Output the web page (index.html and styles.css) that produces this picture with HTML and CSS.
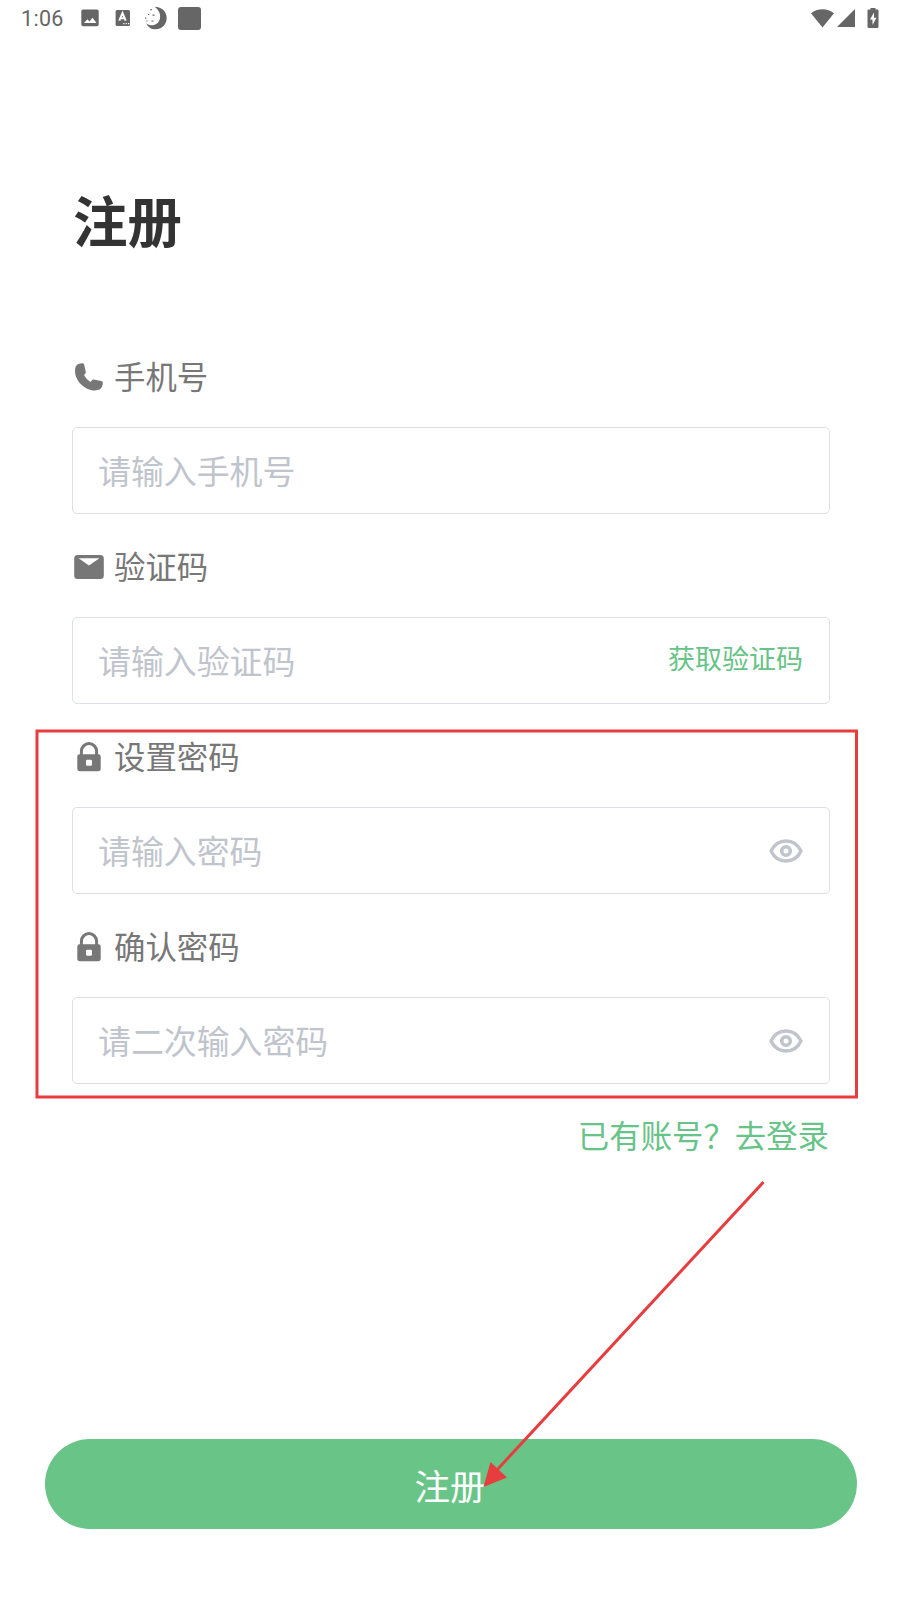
FILE: index.html
```html
<!DOCTYPE html>
<html lang="zh-CN">

	<head>
		<meta charset="UTF-8">
		<title>注册</title>
		<link rel="stylesheet" href="styles.css">
	</head>

	<body>

		<!-- 图标 -->
		<svg class="defs" width="0" height="0">
			<symbol id="lock" viewBox="0 0 30 30">
				<path d="M7.400 13V9.200a7.600 7.600 0 0 1 15.200 0V13" fill="none" stroke="currentColor" stroke-width="3" />
				<path fill="currentColor" fill-rule="evenodd" d="M5.500 12.200h19a2.200 2.200 0 0 1 2.200 2.200v12.200a2.600 2.600 0 0 1-2.600 2.600H5.900a2.600 2.600 0 0 1-2.600-2.600V14.400a2.200 2.200 0 0 1 2.200-2.200zM13.300 17.800a1.300 1.300 0 0 0-1.300 1.300v3.400a1.300 1.300 0 0 0 1.300 1.300h3.400a1.300 1.300 0 0 0 1.300-1.300v-3.400a1.300 1.300 0 0 0-1.300-1.300z" />
			</symbol>
			<symbol id="eye" viewBox="0 0 34 24">
				<path d="M2 12C5.200 5.400 10.600 2 17 2S28.800 5.400 32 12C28.800 18.600 23.400 22 17 22S5.200 18.600 2 12z" fill="none" stroke="currentColor" stroke-width="3.400" stroke-linejoin="round" />
				<circle cx="17" cy="12" r="4.300" fill="none" stroke="currentColor" stroke-width="3.600" />
			</symbol>
		</svg>

		<div class="page">
			<div class="status">
				<span class="time">1:06</span>
				<svg class="ico-pic" width="18" height="18" viewBox="0 0 18 18">
					<path fill="#666" fill-rule="evenodd" d="M2 .5h14A1.800 1.800 0 0 1 17.700 2.300v13a1.900 1.900 0 0 1-1.900 1.900H2.200A1.900 1.900 0 0 1 .3 15.300v-13A1.800 1.800 0 0 1 2 .5zM3 14h12.500l-4-5.200-3.100 3.800-2-2.300z" />
				</svg>
				<svg class="ico-a" width="16" height="18" viewBox="0 0 16 18">
					<rect x=".6" y="1" width="14.400" height="16" rx="1.500" fill="#666" />
					<path d="M4.300 11.600L7.500 4l3.200 7.600M5.500 9.300h4" fill="none" stroke="#fff" stroke-width="2" />
					<path d="M8.300 14.600h1.200M10.700 14.600h1.200M13 14.600h1.200" stroke="#fff" stroke-width="1.200" />
				</svg>
				<svg class="ico-moon" width="24" height="24" viewBox="0 0 24 24">
					<path fill="#666" d="M10.500.8C18 .8 22.700 6 22.700 12A11.300 11.300 0 0 1 11.500 23.300C7 23.300 4 21 2.300 17.500c2.500 1.800 5.500 2.300 8.400 1.200C17.500 16.500 18.500 6 10.500.8z" />
					<path fill="#666" d="M6 3.300h2v1H6zM8.500 8.500h2v1.200h-2zM4 8h1.300v1H4zM1 11.500h1.300v1.300H1zM2.300 14.500h1.300v1H2.300zM7.500 14.500h2v1h-2z" />
				</svg>
				<span class="ico-block"></span>
				<svg class="ico-wifi" width="23" height="19" viewBox="0 0 23 19">
					<path fill="#666" d="M0 4.300C6.500-1.200 16.500-1.200 23 4.300L11.500 18.600z" />
				</svg>
				<svg class="ico-signal" width="18" height="18" viewBox="0 0 18 18">
					<path fill="#666" d="M18 0v18H0z" />
				</svg>
				<svg class="ico-power" width="12" height="20" viewBox="0 0 12 20">
					<path fill="#666" d="M3.500 0h5v1.500H10.500a1 1 0 0 1 1 1v16a1.500 1.500 0 0 1-1.500 1.500H2a1.500 1.500 0 0 1-1.500-1.500v-16a1 1 0 0 1 1-1h2z" />
					<path fill="#fff" d="M7 4.500L3 11.500h2.500v5.500l4-7.200H7z" />
				</svg>
			</div>

			<h1 class="title">注册</h1>

			<div class="form">
				<div class="item">
					<div class="label">
						<svg class="ico" viewBox="0 0 30 30">
							<path fill="currentColor" d="M1.700 4.400C3 2.200 6 1 8.600 1.200c.9.100 1.400.6 1.600 1.500l1.600 7.300c.1.700-.1 1.200-.6 1.700l-1.200 1.300c1.600 3 3.800 5.300 6.600 6.900l1.500-1.800c.5-.5 1-.7 1.700-.6l7.500 1.400c.9.200 1.400.7 1.500 1.500.2 2.500-.9 5.700-3.200 7.200C13.500 32-2.500 18 1.700 4.400z" />
						</svg>
						<span>手机号</span>
					</div>
					<div class="box">
						<input type="text" placeholder="请输入手机号">
					</div>
				</div>
				<div class="item">
					<div class="label">
						<svg class="ico" viewBox="0 0 30 30">
							<path fill="currentColor" fill-rule="evenodd" d="M3.700 3h22.600A3.600 3.600 0 0 1 29.800 6.600v16.800a3.600 3.600 0 0 1-3.500 3.600H3.700A3.600 3.600 0 0 1 .2 23.400V6.600A3.600 3.600 0 0 1 3.700 3zM4.600 6.300L15 13.400l10.400-7.100z" />
						</svg>
						<span>验证码</span>
					</div>
					<div class="box">
						<input type="text" placeholder="请输入验证码">
						<span class="code">获取验证码</span>
					</div>
				</div>
				<div class="item">
					<div class="label">
						<svg class="ico"><use href="#lock" /></svg>
						<span>设置密码</span>
					</div>
					<div class="box">
						<input type="password" placeholder="请输入密码">
						<svg class="eye"><use href="#eye" /></svg>
					</div>
				</div>
				<div class="item">
					<div class="label">
						<svg class="ico"><use href="#lock" /></svg>
						<span>确认密码</span>
					</div>
					<div class="box">
						<input type="password" placeholder="请二次输入密码">
						<svg class="eye"><use href="#eye" /></svg>
					</div>
				</div>
			</div>

			<div class="login">已有账号？去登录</div>

			<button class="submit">注册</button>

			<!-- 标注 -->
			<svg class="mark" width="900" height="1600" viewBox="0 0 900 1600">
				<rect x="37" y="731" width="819.500" height="366" fill="none" stroke="#e73d3e" stroke-width="3" />
				<path d="M763.500 1182L496 1471" stroke="#e73d3e" stroke-width="3" />
				<path d="M483.500 1487l7-25 16.500 15.600z" fill="#e73d3e" />
			</svg>
		</div>

	</body>

</html>
```
FILE: styles.css
```css
* {
	box-sizing: border-box;
}

body {
	margin: 0;
	background-color: #fff;
	font-family: "Noto Sans CJK SC", sans-serif;
}

.defs {
	position: absolute;
}

.page {
	position: relative;
	width: 900px;
	height: 1600px;
	overflow: hidden;
	display: flex;
	flex-direction: column;
}

.status {
	height: 36px;
	padding: 0 21px;
	display: flex;
	align-items: center;
	flex-shrink: 0;
}

.time {
	width: 60px;
	padding-top: 1px;
	font: 21.5px/36px Roboto, sans-serif;
	letter-spacing: 0.3px;
	color: #666;
}

.ico-a {
	margin-left: 16px;
}

.ico-moon {
	margin-left: 13px;
}

.ico-block {
	width: 23px;
	height: 23px;
	margin-left: 10px;
	border-radius: 3px;
	background-color: #666;
}

.ico-wifi {
	margin-left: auto;
}

.ico-signal {
	margin-left: 3px;
}

.ico-power {
	margin-left: 12px;
}

.title {
	margin: 143px 0 0 73px;
	font-size: 54.5px;
	line-height: 80px;
	font-weight: bold;
	color: #333;
}

.form {
	margin-top: 93px;
	padding: 0 70px 0 72px;
}

.item {
	height: 190px;
}

.label {
	height: 50px;
	display: flex;
	align-items: center;
	font-size: 31.4px;
	color: #777;
}

.label span {
	line-height: 48px;
	padding-bottom: 2px;
}

.ico {
	width: 30px;
	height: 30px;
	margin-left: 2px;
	margin-right: 10px;
}

.box {
	height: 87px;
	margin-top: 25px;
	padding: 0 26px 0 25px;
	display: flex;
	align-items: center;
	border: 1px solid #dcdfe6;
	border-radius: 5px;
}

.box input {
	flex: 1;
	min-width: 0;
	height: 85px;
	padding: 0 0 2px;
	border: 0;
	outline: none;
	background: none;
	font-family: inherit;
	font-size: 32.9px;
}

.box input::placeholder {
	color: #c0c4cc;
}

.code {
	font-size: 27px;
	line-height: 40px;
	padding-bottom: 6px;
	color: #67c387;
}

.eye {
	width: 34px;
	height: 24px;
	color: #c0c4cc;
}

.login {
	margin-top: -2px;
	padding-right: 71px;
	font-size: 31.4px;
	line-height: 50px;
	text-align: right;
	color: #67c387;
}

.submit {
	height: 90px;
	margin: auto 43px 71px 45px;
	padding: 0 2px 0 0;
	border: 0;
	border-radius: 45px;
	background-color: #69c488;
	font-family: inherit;
	font-size: 35.5px;
	color: #fff;
}

.mark {
	position: absolute;
	left: 0;
	top: 0;
	pointer-events: none;
}
```
